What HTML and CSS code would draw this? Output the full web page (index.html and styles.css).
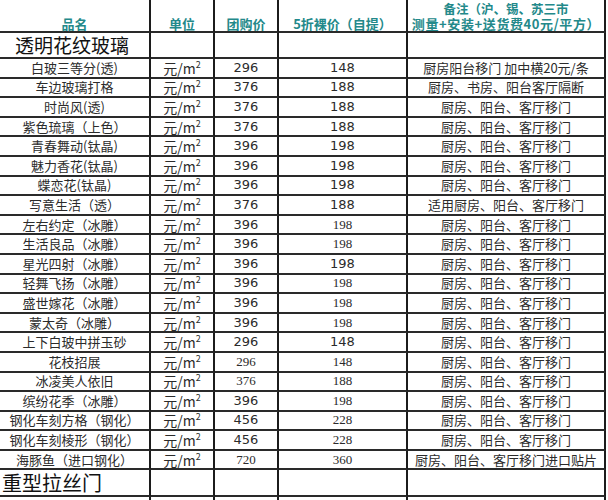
FILE: index.html
```html
<!DOCTYPE html>
<html lang="zh-CN">
<head>
<meta charset="utf-8">
<title>玻璃价格表</title>
<link rel="stylesheet" href="styles.css">
</head>
<body>
<table class="price">
  <colgroup>
    <col class="c-name"><col class="c-unit"><col class="c-group"><col class="c-net"><col class="c-note">
  </colgroup>
  <thead>
    <tr class="head">
      <th>品名</th>
      <th>单位</th>
      <th>团购价</th>
      <th>5折裸价（自提）</th>
      <th class="note-head"><span class="l1">备注（沪、锡、苏三市</span><span class="l2">测量+安装+送货费40元/平方）</span></th>
    </tr>
  </thead>
  <tbody>
    <tr class="section"><td>透明花纹玻璃</td><td></td><td></td><td></td><td></td></tr>
    <tr class="row"><td>白玻三等分(透)</td><td class="u">元/m<sup>2</sup></td><td class="n">296</td><td class="n">148</td><td>厨房阳台移门 加中横20元/条</td></tr>
    <tr class="row"><td>车边玻璃打格</td><td class="u">元/m<sup>2</sup></td><td class="n">376</td><td class="n">188</td><td>厨房、书房、阳台客厅隔断</td></tr>
    <tr class="row"><td>时尚风(透)</td><td class="u">元/m<sup>2</sup></td><td class="n">376</td><td class="n">188</td><td>厨房、阳台、客厅移门</td></tr>
    <tr class="row"><td>紫色琉璃（上色）</td><td class="u">元/m<sup>2</sup></td><td class="n">376</td><td class="n">188</td><td>厨房、阳台、客厅移门</td></tr>
    <tr class="row"><td>青春舞动(钛晶)</td><td class="u">元/m<sup>2</sup></td><td class="n">396</td><td class="n">198</td><td>厨房、阳台、客厅移门</td></tr>
    <tr class="row"><td>魅力香花(钛晶)</td><td class="u">元/m<sup>2</sup></td><td class="n">396</td><td class="n">198</td><td>厨房、阳台、客厅移门</td></tr>
    <tr class="row"><td>蝶恋花(钛晶)</td><td class="u">元/m<sup>2</sup></td><td class="n">396</td><td class="n">198</td><td>厨房、阳台、客厅移门</td></tr>
    <tr class="row"><td>写意生活（透）</td><td class="u">元/m<sup>2</sup></td><td class="n">376</td><td class="n">188</td><td>适用厨房、阳台、客厅移门</td></tr>
    <tr class="row"><td>左右约定（冰雕）</td><td class="u">元/m<sup>2</sup></td><td class="n">396</td><td class="s">198</td><td>厨房、阳台、客厅移门</td></tr>
    <tr class="row"><td>生活良品（冰雕）</td><td class="u">元/m<sup>2</sup></td><td class="n">396</td><td class="s">198</td><td>厨房、阳台、客厅移门</td></tr>
    <tr class="row"><td>星光四射（冰雕）</td><td class="u">元/m<sup>2</sup></td><td class="n">396</td><td class="n">198</td><td>厨房、阳台、客厅移门</td></tr>
    <tr class="row"><td>轻舞飞扬（冰雕）</td><td class="u">元/m<sup>2</sup></td><td class="n">396</td><td class="s">198</td><td>厨房、阳台、客厅移门</td></tr>
    <tr class="row"><td>盛世嫁花（冰雕）</td><td class="u">元/m<sup>2</sup></td><td class="n">396</td><td class="s">198</td><td>厨房、阳台、客厅移门</td></tr>
    <tr class="row"><td>蒙太奇（冰雕）</td><td class="u">元/m<sup>2</sup></td><td class="n">396</td><td class="s">198</td><td>厨房、阳台、客厅移门</td></tr>
    <tr class="row"><td>上下白玻中拼玉砂</td><td class="u">元/m<sup>2</sup></td><td class="n">296</td><td class="n">148</td><td>厨房、阳台、客厅移门</td></tr>
    <tr class="row"><td>花枝招展</td><td class="u">元/m<sup>2</sup></td><td class="s">296</td><td class="s">148</td><td>厨房、阳台、客厅移门</td></tr>
    <tr class="row"><td>冰凌美人依旧</td><td class="u">元/m<sup>2</sup></td><td class="s">376</td><td class="s">188</td><td>厨房、阳台、客厅移门</td></tr>
    <tr class="row"><td>缤纷花季（冰雕）</td><td class="u">元/m<sup>2</sup></td><td class="n">396</td><td class="s">198</td><td>厨房、阳台、客厅移门</td></tr>
    <tr class="row"><td>钢化车刻方格（钢化）</td><td class="u">元/m<sup>2</sup></td><td class="n">456</td><td class="s">228</td><td>厨房、阳台、客厅移门</td></tr>
    <tr class="row"><td>钢化车刻棱形（钢化）</td><td class="u">元/m<sup>2</sup></td><td class="n">456</td><td class="s">228</td><td>厨房、阳台、客厅移门</td></tr>
    <tr class="row"><td>海豚鱼（进口钢化）</td><td class="u">元/m<sup>2</sup></td><td class="s">720</td><td class="s">360</td><td>厨房、阳台、客厅移门进口贴片</td></tr>
    <tr class="section last"><td>重型拉丝门</td><td></td><td></td><td></td><td></td></tr>
    <tr class="row"><td></td><td></td><td></td><td></td><td></td></tr>
  </tbody>
</table>
</body>
</html>
```

FILE: styles.css
```css
* { box-sizing: border-box; }
html, body { margin: 0; padding: 0; background: #fff; }
body {
  font-family: "Noto Sans CJK SC", "DejaVu Sans", sans-serif;
  color: #222;
  overflow: hidden;
}
.price {
  border-collapse: separate;
  border-spacing: 0;
  table-layout: fixed;
  width: 606px;
}
.c-name { width: 151px; }
.c-unit { width: 64px; }
.c-group { width: 64px; }
.c-net { width: 129px; }
.c-note { width: 198px; }

.price th, .price td {
  border-right: 2px solid #1c1c1c;
  border-bottom: 2px solid #2a2a2a;
  padding: 0;
  text-align: center;
  white-space: nowrap;
  overflow: visible;
}
.head th {
  height: 33px;
  vertical-align: bottom;
  color: #23898a;
  font-weight: 700;
  font-size: 13px;
  line-height: 15px;
  padding-bottom: 0;
}
.head .note-head {
  font-size: 12.5px;
  line-height: 15px;
}
.note-head .l1,
.note-head .l2 { display: block; height: 15px; }
.note-head .l2 { letter-spacing: 0.6px; font-size: 13px; }

.section td {
  height: 26px;
  font-size: 19px;
  line-height: 22px;
  color: #111;
  vertical-align: middle;
}
.section td:first-child { text-align: left; padding-left: 15px; }
.section.last td { height: 27px; }
.section.last td:first-child { padding-left: 2px; font-size: 20px; }

.row td {
  height: 19.6px;
  font-size: 13px;
  line-height: 16px;
  vertical-align: middle;
  color: #2b2b2b;
}
.row .u { font-size: 14px; }
.row .u sup { font-size: 9px; vertical-align: 6px; line-height: 0; }
.row .n { font-family: "DejaVu Sans", sans-serif; font-size: 13px; }
.row .s { font-family: "Liberation Serif", serif; font-size: 13px; }
```
